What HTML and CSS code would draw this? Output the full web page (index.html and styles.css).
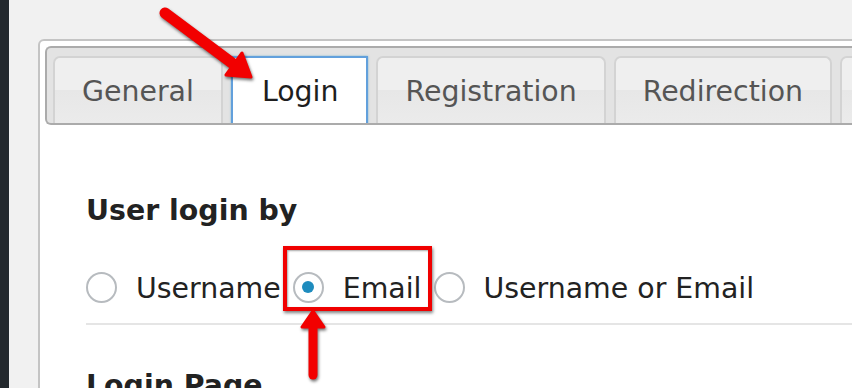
FILE: index.html
```html
<!DOCTYPE html>
<html>
<head>
<meta charset="utf-8">
<link rel="stylesheet" href="styles.css">
</head>
<body>
<div class="sidebar"></div>
<div class="main">
  <div class="panel">
    <div class="tabbar">
      <div class="tab">General</div>
      <div class="tab active">Login</div>
      <div class="tab">Registration</div>
      <div class="tab">Redirection</div>
      <div class="tab stub"></div>
    </div>
    <div class="content">
      <h2 class="heading">User login by</h2>
      <div class="radios">
        <label class="opt"><span class="radio"></span><span class="lbl">Username</span></label>
        <label class="opt"><span class="radio checked"></span><span class="lbl">Email</span></label>
        <label class="opt"><span class="radio"></span><span class="lbl">Username or Email</span></label>
      </div>
      <div class="sep"></div>
      <h2 class="heading second">Login Page</h2>
    </div>
  </div>
</div>
<div class="highlight"></div>
<svg class="arrows" width="852" height="388" viewBox="0 0 852 388">
  <g class="arrow">
    <line x1="165" y1="13" x2="236" y2="66" stroke="#f20000" stroke-width="11" stroke-linecap="round"/>
    <polygon points="251,77 226,75 242,53" fill="#f20000" stroke="#f20000" stroke-width="3" stroke-linejoin="round"/>
  </g>
  <g class="arrow">
    <line x1="313" y1="375" x2="313" y2="322" stroke="#f20000" stroke-width="9" stroke-linecap="round"/>
    <polygon points="313,311 302,327 324,327" fill="#f20000" stroke="#f20000" stroke-width="3" stroke-linejoin="round"/>
  </g>
</svg>
</body>
</html>
```
FILE: styles.css
```css
html, body {
  margin: 0;
  padding: 0;
  width: 852px;
  height: 388px;
  overflow: hidden;
}
body {
  background: #f1f1f1;
  display: flex;
  position: relative;
  font-family: "DejaVu Sans", Verdana, sans-serif;
}
.sidebar {
  width: 9px;
  flex: none;
  background: #23282d;
}
.main {
  flex: 1;
  padding: 39px 0 0 29px;
  min-width: 0;
}
.panel {
  width: 860px;
  height: 400px;
  background: #fff;
  border: 2px solid #c4c4c4;
  border-radius: 6px;
  padding: 5px 0 0 5px;
  box-sizing: border-box;
}
.tabbar {
  display: flex;
  gap: 8px;
  background: #e3e3e3;
  border: 2px solid #ababab;
  border-right: none;
  border-radius: 6px 0 0 6px;
  padding: 8px 0 0 6px;
  height: 79px;
  box-sizing: border-box;
  overflow: hidden;
  align-items: flex-end;
}
.tab {
  flex: none;
  height: 67px;
  box-sizing: border-box;
  padding: 1px 27px 0;
  border: 2px solid #d3d3d3;
  border-bottom: none;
  border-radius: 7px 7px 0 0;
  background: linear-gradient(#efefef 0, #efefef 50%, #e7e7e7 50%, #ebebeb 100%);
  color: #555;
  font-size: 28.4px;
  display: flex;
  align-items: center;
}
.tab.stub {
  width: 60px;
}
.tab.active {
  height: 69px;
  margin-bottom: -2px;
  padding: 1px 28px 0 29px;
  background: #fff;
  border: 2px solid #62a0dc;
  border-radius: 0;
  color: #1e1e1e;
  box-shadow: 0 0 2px rgba(30, 140, 190, 0.5);
}
.content {
  margin-left: 41px;
  color: #222;
}
.heading {
  margin: 69px 0 0 0;
  font-size: 28.4px;
  line-height: 34px;
  font-weight: bold;
  color: #222;
}
.heading.second {
  margin-top: 44px;
}
.radios {
  display: flex;
  margin-top: 42px;
  height: 34px;
  align-items: center;
}
.opt {
  display: flex;
  align-items: center;
  margin-right: 12px;
}
.radio {
  width: 31px;
  height: 31px;
  box-sizing: border-box;
  border: 2px solid #b7bbbf;
  border-radius: 50%;
  background: #fff;
  display: flex;
  align-items: center;
  justify-content: center;
  margin-right: 19px;
}
.radio.checked::after {
  content: "";
  width: 12px;
  height: 12px;
  border-radius: 50%;
  background: #1e8cbe;
}
.lbl {
  font-size: 28.4px;
  line-height: 34px;
  color: #222;
  padding-top: 3px;
}
.sep {
  margin-top: 19px;
  height: 2px;
  background: #e5e5e5;
}
.highlight {
  position: absolute;
  left: 283px;
  top: 246px;
  width: 149px;
  height: 65px;
  box-sizing: border-box;
  border: 4px solid #f00000;
  box-shadow: 1px 2px 3px rgba(0, 0, 0, 0.5), inset 1px 1px 2px rgba(0, 0, 0, 0.35);
}
.arrows {
  position: absolute;
  left: 0;
  top: 0;
  pointer-events: none;
}
.arrow {
  filter: drop-shadow(1px 2px 1.5px rgba(0, 0, 0, 0.55));
}
```
